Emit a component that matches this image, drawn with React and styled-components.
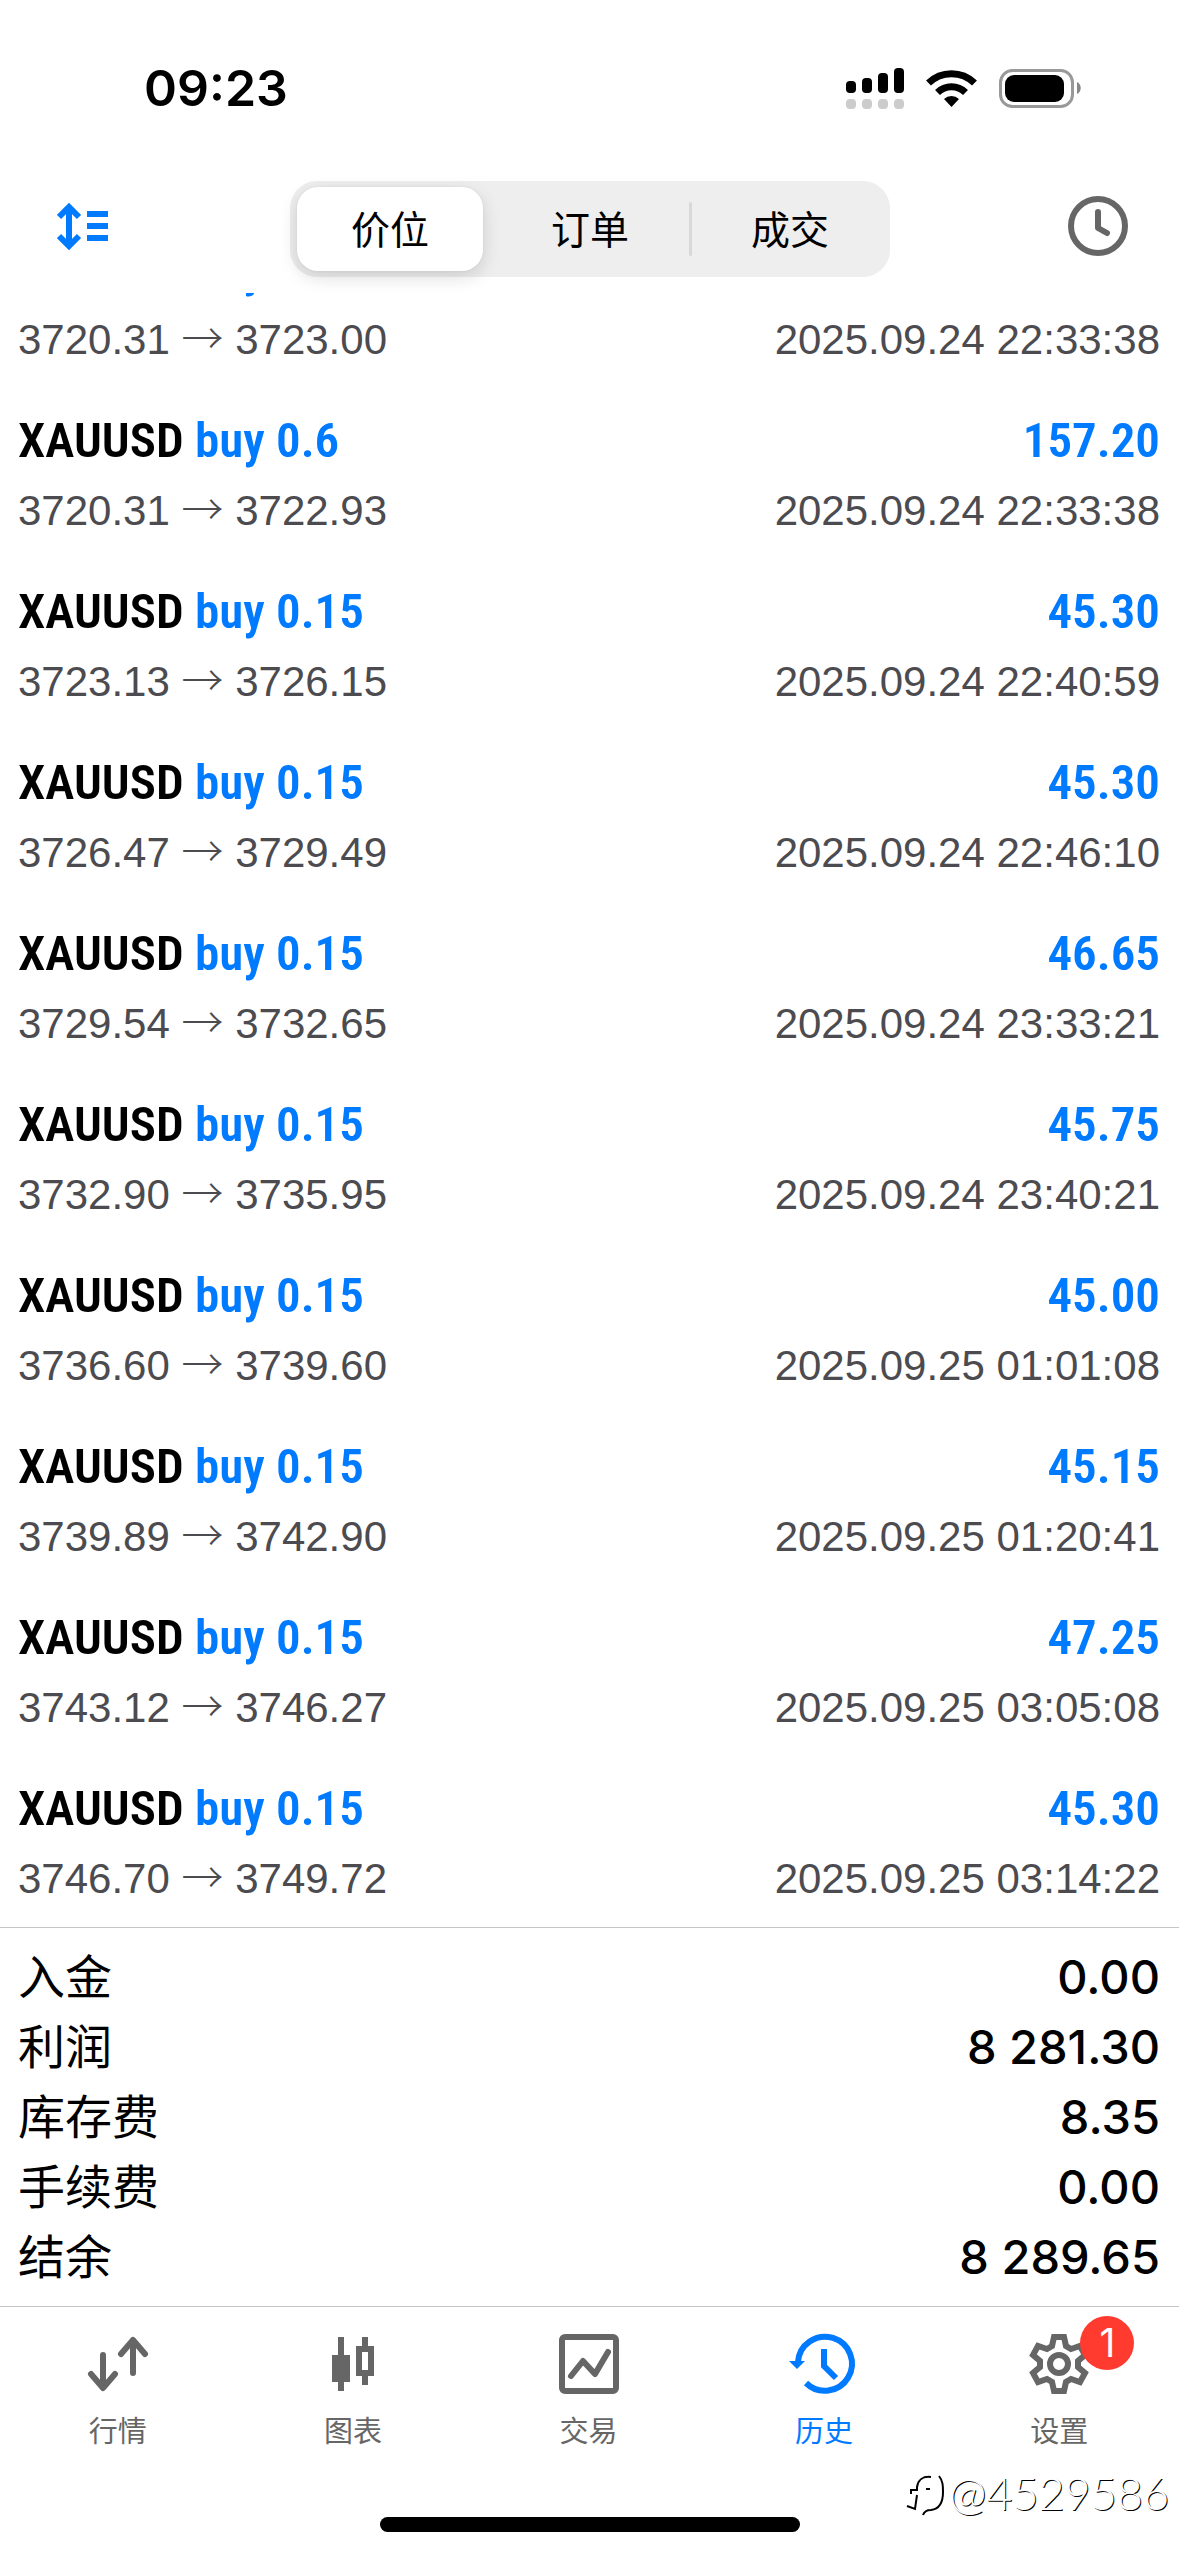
import React from 'react'
import styled, { createGlobalStyle } from 'styled-components'

const GlobalStyle = createGlobalStyle`
  * {
    box-sizing: border-box;
  }
  body {
    margin: 0;
    background: #fff;
    color: #000;
    font-family: Inter, "Noto Sans CJK SC", sans-serif;
  }
  button {
    margin: 0;
    padding: 0;
    border: 0;
    background: none;
    color: inherit;
    font: inherit;
  }
`

const Screen = styled.div`
  display: flex;
  flex-direction: column;
  height: 100vh;
  overflow: hidden;
`

const StatusBar = styled.header`
  display: flex;
  align-items: center;
  justify-content: space-between;
  padding: 56px 98px 0 144px;
`

const Clock = styled.time`
  font-size: 50px;
  font-weight: 600;
  line-height: 64px;
`

const StatusIcons = styled.div`
  display: flex;
  align-items: center;
  gap: 22px;
`

const Toolbar = styled.div`
  display: flex;
  align-items: flex-start;
  justify-content: space-between;
  padding: 61px 47px 16px 48px;
`

const IconButton = styled.button`
  display: flex;
  width: 69px;
  height: 90px;
  align-items: center;
  justify-content: center;
  color: ${({ $accent }) => ($accent ? '#007aff' : '#666')};
`

const Segments = styled.div`
  display: grid;
  grid-template-columns: repeat(3, 1fr);
  width: 600px;
  padding: 6px 0;
  border-radius: 27px;
  background: #eee;
`

const Segment = styled.button`
  position: relative;
  height: 84px;
  padding-bottom: 4px;
  border-radius: 21px;
  font-size: 39px;
  ${({ $active }) => $active && `
    margin: 0 7px;
    background: #fff;
    box-shadow: 0 6px 18px rgba(0, 0, 0, 0.14), 0 0 3px rgba(0, 0, 0, 0.06);
  `}
  ${({ $divided }) => $divided && `
    &::before {
      content: '';
      position: absolute;
      left: -1px;
      top: 15px;
      bottom: 15px;
      width: 3px;
      border-radius: 2px;
      background: #d8d8d8;
    }
  `}
`

const Deals = styled.ul`
  display: flex;
  flex: 1;
  flex-direction: column;
  justify-content: flex-end;
  min-height: 0;
  margin: 0;
  padding: 0;
  overflow: hidden;
  list-style: none;
`

const Deal = styled.li`
  display: grid;
  flex: none;
  gap: 5px;
  padding: 20px 19px 16px 18px;
`

const Line = styled.div`
  display: flex;
  align-items: baseline;
  justify-content: space-between;
`

const Title = styled(Line)`
  font-family: "Roboto Condensed", Roboto, sans-serif;
  font-size: 49px;
  font-weight: 600;
  line-height: 66px;
`

const Blue = styled.span`
  color: #007aff;
`

const Details = styled(Line)`
  color: #4c4b50;
  font-family: "Liberation Sans", sans-serif;
  font-size: 42px;
  line-height: 64px;
`

const Arrow = styled.span`
  font-family: "Noto Sans CJK SC", sans-serif;
  font-weight: 300;
  line-height: 1;
`

const Summary = styled.dl`
  margin: 0;
  padding: 14px 19px 14px 18px;
  border-top: 1px solid #c6c6c8;
  font-size: 47px;
  line-height: 70px;
`

const Total = styled.dd`
  margin: 0;
  font-weight: 500;
`

const TabBar = styled.nav`
  display: flex;
  padding-right: 2px;
  border-top: 1px solid #c6c6c8;
`

const Tab = styled.button`
  flex: 1;
  display: flex;
  flex-direction: column;
  align-items: center;
  gap: 16px;
  padding-top: 27px;
  color: ${({ $active }) => ($active ? '#007aff' : '#666')};
  font-size: 29px;
  line-height: 44px;
`

const TabIcon = styled.span`
  position: relative;
  display: flex;

  svg {
    overflow: visible;
  }
`

const Badge = styled.span`
  position: absolute;
  left: 51px;
  top: -18px;
  width: 54px;
  border-radius: 27px;
  background: #ff3b30;
  color: #fff;
  font-size: 39px;
  line-height: 54px;
  text-align: center;
`

const Footer = styled.footer`
  display: flex;
  flex-direction: column;
  align-items: center;
  padding-bottom: 24px;
`

const Watermark = styled.div`
  display: flex;
  align-self: flex-end;
  align-items: center;
  gap: 4px;
  height: 63px;
  padding: 16px 10px 0 0;
  color: #fff;
  font-family: Lato, sans-serif;
  font-size: 45px;
  font-weight: 300;
  line-height: 47px;
  text-shadow: 1px 1px 0 #000;
`

const HomeIndicator = styled.div`
  width: 420px;
  height: 15px;
  border-radius: 8px;
  background: #000;
`

const SignalIcon = () => (
  <svg width="58" height="41" viewBox="0 0 58 41">
    {[0, 3, 8, 13].map((rise, i) => (
      <g key={i}>
        <rect x={i * 16} y={13 - rise} width="10" height={12 + rise} rx="4" />
        <rect x={i * 16} y="31" width="10" height="10" rx="4" fill="#ccc" />
      </g>
    ))}
  </svg>
)

const WifiIcon = () => (
  <svg width="51" height="37" viewBox="0 0 51 37" fill="none" stroke="#000" strokeWidth="7">
    <path d="M2.500 13a33 33 0 0 1 46 0" />
    <path d="M11.500 22.500a20 20 0 0 1 28 0" />
    <path d="M25.500 37l-7.500-8a11 11 0 0 1 15 0z" fill="#000" stroke="none" />
  </svg>
)

const BatteryIcon = () => (
  <svg width="82" height="39" viewBox="0 0 82 39">
    <rect x="1.500" y="1.500" width="72" height="36" rx="12" fill="none" stroke="#999" strokeWidth="3" />
    <rect x="6" y="6" width="59" height="27" rx="9" />
    <path d="M78 13c5 2 5 10 0 12z" fill="#888" />
  </svg>
)

const SortIcon = () => (
  <svg width="51" height="47" viewBox="0 0 51 47" fill="none" stroke="currentColor" strokeWidth="6">
    <path d="M12 4v39M2 14L12 4l10 10M2 33l10 10 10-10" />
    <path d="M30 11h21M30 23h21M30 35h21" />
  </svg>
)

const ClockIcon = () => (
  <svg width="60" height="60" viewBox="0 0 60 60" fill="none" stroke="currentColor" strokeWidth="6" strokeLinecap="round" strokeLinejoin="round">
    <circle cx="30" cy="30" r="27" />
    <path d="M30 16v16l9 5" />
  </svg>
)

const QuotesIcon = () => (
  <svg width="60" height="60" viewBox="0 0 60 60" fill="none" stroke="currentColor" strokeWidth="6" strokeLinecap="round" strokeLinejoin="round">
    <path d="M15 21v32M3 40l12 14 12-14M45 39V7M33 20L45 6l12 14" />
  </svg>
)

const ChartIcon = () => (
  <svg width="60" height="60" viewBox="0 0 60 60" fill="currentColor">
    <path d="M15 3h6v18h6v27h-6v9h-6v-9H9V21h6z" />
    <path fillRule="evenodd" d="M39 3h6v9h6v30h-6v9h-6v-9h-6V12h6zM39 18h6v18h-6z" />
  </svg>
)

const TradeIcon = () => (
  <svg width="60" height="60" viewBox="0 0 60 60" fill="none" stroke="currentColor" strokeWidth="6" strokeLinecap="round" strokeLinejoin="round">
    <rect x="3" y="3" width="54" height="54" rx="3" />
    <path d="M12 42l12-15 12 13 13-22" />
  </svg>
)

const HistoryIcon = () => (
  <svg width="60" height="60" viewBox="5 0 60 60" fill="none" stroke="currentColor" strokeWidth="6">
    <path d="M9 28a27 27 0 1 1 8 21" />
    <path d="M0 27h16l-8 8z" fill="currentColor" stroke="none" />
    <path d="M35 15v17l12 12" />
  </svg>
)

const GearIcon = () => (
  <svg width="60" height="60" viewBox="0 0 60 60" fill="none" stroke="currentColor" strokeWidth="6">
    <path d="M25 3h10l2 9 5 3 9-3 5 9-7 6v6l7 6-5 9-9-3-5 3-2 9H25l-2-9-5-3-9 3-5-9 7-6v-6l-7-6 5-9 9 3 5-3z" />
    <circle cx="30" cy="30" r="9" />
  </svg>
)

const WatermarkIcon = () => (
  <svg width="40" height="44" viewBox="0 0 40 44" fill="none" stroke="#000" strokeWidth="2">
    <path d="M26 5C18 4 13 8 12 15v3H6v4" />
    <path d="M21 17h4M12 23l-2 14-8-3" />
    <path d="M34 4c4 5 4 10 4 16 0 11-4 17-12 18-5 0-7 2-8 5" />
  </svg>
)

const deals = [
  ['0.6', '161.40', '3720.31', '3723.00', '2025.09.24 22:33:38'],
  ['0.6', '157.20', '3720.31', '3722.93', '2025.09.24 22:33:38'],
  ['0.15', '45.30', '3723.13', '3726.15', '2025.09.24 22:40:59'],
  ['0.15', '45.30', '3726.47', '3729.49', '2025.09.24 22:46:10'],
  ['0.15', '46.65', '3729.54', '3732.65', '2025.09.24 23:33:21'],
  ['0.15', '45.75', '3732.90', '3735.95', '2025.09.24 23:40:21'],
  ['0.15', '45.00', '3736.60', '3739.60', '2025.09.25 01:01:08'],
  ['0.15', '45.15', '3739.89', '3742.90', '2025.09.25 01:20:41'],
  ['0.15', '47.25', '3743.12', '3746.27', '2025.09.25 03:05:08'],
  ['0.15', '45.30', '3746.70', '3749.72', '2025.09.25 03:14:22']
]

const totals = [
  ['入金', '0.00'],
  ['利润', '8 281.30'],
  ['库存费', '8.35'],
  ['手续费', '0.00'],
  ['结余', '8 289.65']
]

const tabs = [
  { label: '行情', Icon: QuotesIcon },
  { label: '图表', Icon: ChartIcon },
  { label: '交易', Icon: TradeIcon },
  { label: '历史', Icon: HistoryIcon, active: true },
  { label: '设置', Icon: GearIcon, badge: 1 }
]

export default () => (
  <Screen>
    <GlobalStyle />
    <StatusBar>
      <Clock>09:23</Clock>
      <StatusIcons>
        <SignalIcon />
        <WifiIcon />
        <BatteryIcon />
      </StatusIcons>
    </StatusBar>
    <Toolbar>
      <IconButton $accent aria-label="排序"><SortIcon /></IconButton>
      <Segments role="tablist">
        <Segment role="tab" aria-selected="true" $active>价位</Segment>
        <Segment role="tab" aria-selected="false">订单</Segment>
        <Segment role="tab" aria-selected="false" $divided>成交</Segment>
      </Segments>
      <IconButton aria-label="时间"><ClockIcon /></IconButton>
    </Toolbar>
    <Deals>
      {deals.map(([volume, profit, open, close, time], i) => (
        <Deal key={i}>
          <Title>
            <span>XAUUSD <Blue>buy {volume}</Blue></span>
            <Blue>{profit}</Blue>
          </Title>
          <Details>
            <span>{open} <Arrow>→</Arrow> {close}</span>
            <time>{time}</time>
          </Details>
        </Deal>
      ))}
    </Deals>
    <Summary>
      {totals.map(([term, value]) => (
        <Line key={term}>
          <dt>{term}</dt>
          <Total>{value}</Total>
        </Line>
      ))}
    </Summary>
    <TabBar>
      {tabs.map(({ label, Icon, active, badge }) => (
        <Tab key={label} $active={active}>
          <TabIcon>
            <Icon />
            {badge && <Badge>{badge}</Badge>}
          </TabIcon>
          {label}
        </Tab>
      ))}
    </TabBar>
    <Footer>
      <Watermark><WatermarkIcon />@4529586</Watermark>
      <HomeIndicator />
    </Footer>
  </Screen>
)
